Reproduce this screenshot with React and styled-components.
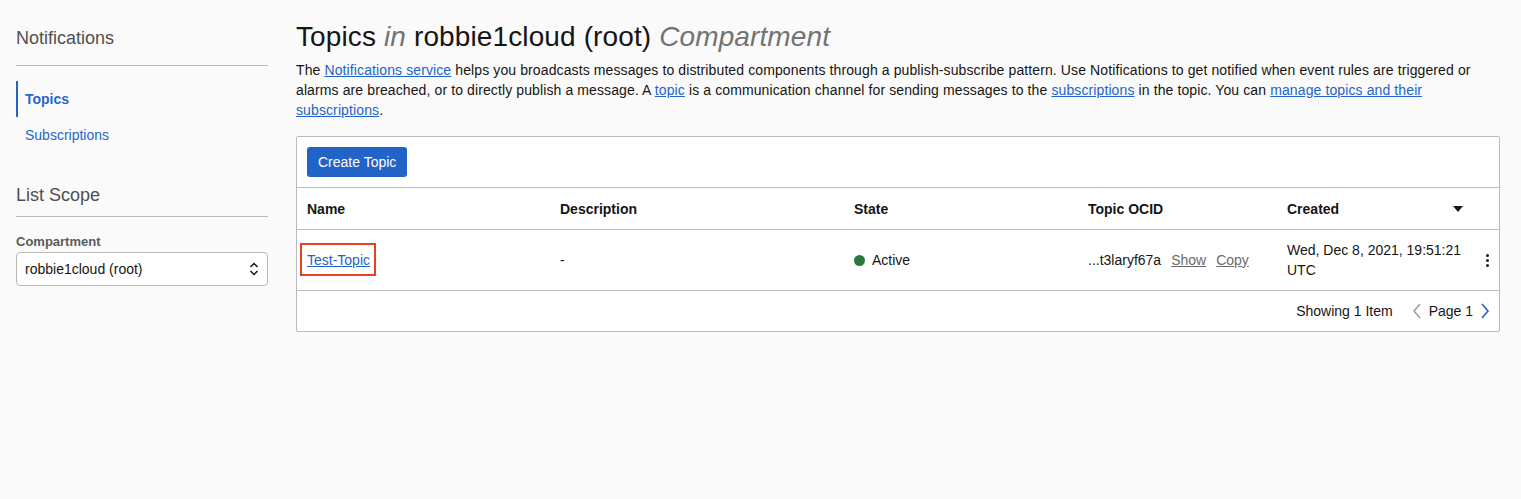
import React from 'react';
import styled, { createGlobalStyle } from 'styled-components';

const GlobalStyle = createGlobalStyle`
  html, body {
    margin: 0;
    padding: 0;
    background: #fafafa;
  }
  body {
    font-family: "Liberation Sans", Arial, sans-serif;
    color: #161513;
  }
`;

const Page = styled.div`
  display: flex;
  gap: 28px;
  padding: 20px 21px 0 16px;
  min-height: 479px;
`;

const Sidebar = styled.aside`
  width: 252px;
  flex: none;
`;

const SideTitle = styled.h2`
  margin: 0;
  font-size: 18px;
  font-weight: 400;
  line-height: 36px;
  color: #505050;
  padding-bottom: ${(p) => p.pad}px;
  border-bottom: 1px solid #b8bbbf;
`;

const NavList = styled.nav`
  display: flex;
  flex-direction: column;
  padding: 15px 0 0;
  margin-bottom: 24px;
`;

const NavItem = styled.a`
  display: block;
  height: 36px;
  line-height: 36px;
  padding-left: 7px;
  font-size: 14px;
  color: #2468c9;
  font-weight: ${(p) => (p.active ? 700 : 400)};
  border-left: 2px solid ${(p) => (p.active ? '#2462c4' : 'transparent')};
  text-decoration: none;
`;

const FieldLabel = styled.label`
  display: block;
  margin-top: 15px;
  font-size: 13px;
  font-weight: 700;
  color: #5a5a5a;
  line-height: 20px;
`;

const Select = styled.div`
  display: flex;
  align-items: center;
  justify-content: space-between;
  height: 34px;
  box-sizing: border-box;
  padding: 0 8px;
  background: #fff;
  border: 1px solid #b8b8b8;
  border-radius: 4px;
  font-size: 14px;
`;

const Main = styled.main`
  flex: 1;
  min-width: 0;
`;

const Title = styled.h1`
  margin: 0;
  font-size: 28px;
  font-weight: 400;
  line-height: 34px;
  letter-spacing: 0.12px;
  color: #161513;

  em {
    color: #737373;
  }
`;

const Intro = styled.p`
  margin: 6px 0 16px;
  font-size: 14px;
  line-height: 20px;
  letter-spacing: 0.11px;
`;

const Link = styled.a`
  color: #1f63c8;
  text-decoration: underline;
`;

const Card = styled.section`
  background: #fff;
  border: 1px solid #b9bcc0;
  border-radius: 2px;
`;

const Toolbar = styled.div`
  padding: 10px;
  border-bottom: 1px solid #b9bcc0;
`;

const PrimaryButton = styled.button`
  height: 30px;
  padding: 0 11px;
  border: none;
  border-radius: 3px;
  background: #2163c6;
  color: #fff;
  font-family: inherit;
  font-size: 14px;
`;

const Row = styled.div`
  display: grid;
  grid-template-columns: 253px 294px 234px 199px 1fr;
  min-height: ${(p) => p.height}px;
  border-bottom: 1px solid #b9bcc0;
`;

const Cell = styled.div`
  display: flex;
  align-items: center;
  gap: ${(p) => p.gap || 0}px;
  padding: 0 10px;
  font-size: 14px;
  line-height: 20px;
  font-weight: ${(p) => (p.head ? 700 : 400)};
  & + & {
    border-left: ${(p) => (p.head ? '1px solid #b9bcc0' : 'none')};
  }
`;

const HeadCell = styled(Cell).attrs({ head: true })``;

const Highlighted = styled.span`
  position: relative;
  &::after {
    content: '';
    position: absolute;
    top: -7px;
    bottom: -6px;
    left: -7px;
    right: -6px;
    border: 2px solid #e9401f;
  }
`;

const Dot = styled.span`
  width: 11px;
  height: 11px;
  border-radius: 50%;
  background: #2c7a3a;
`;

const SubtleLink = styled.a`
  color: #6b6b6b;
  text-decoration: underline;
  margin-left: ${(p) => p.gap}px;
`;

const SortArrow = styled.span`
  margin-left: auto;
  margin-right: 26px;
  width: 0;
  height: 0;
  border-left: 5px solid transparent;
  border-right: 5px solid transparent;
  border-top: 6px solid #161513;
`;

const Kebab = styled.span`
  margin-left: auto;
  display: flex;
  flex-direction: column;
  gap: 2px;
  span {
    width: 3px;
    height: 3px;
    border-radius: 50%;
    background: #161513;
  }
`;

const Footer = styled.div`
  display: flex;
  justify-content: flex-end;
  align-items: center;
  height: 40px;
  padding-right: 8px;
  font-size: 14px;
`;

const Pager = styled.span`
  display: flex;
  align-items: center;
  gap: 6px;
  margin-left: 18px;
`;

const Chevron = ({ dir, color }) => (
  <svg width="12" height="18" viewBox="0 0 12 18">
    <path
      d={dir === 'left' ? 'M9 2 L3 9 L9 16' : 'M3 2 L9 9 L3 16'}
      fill="none"
      stroke={color}
      strokeWidth="1.6"
    />
  </svg>
);

const UpDown = () => (
  <svg width="10" height="16" viewBox="0 0 10 16">
    <path d="M1.5 6 L5 2.5 L8.5 6 M1.5 10 L5 13.5 L8.5 10" fill="none" stroke="#161513" strokeWidth="1.5" />
  </svg>
);

export default function App() {
  return (
    <>
      <GlobalStyle />
      <Page>
        <Sidebar>
          <SideTitle pad={9}>Notifications</SideTitle>
          <NavList>
            <NavItem active>Topics</NavItem>
            <NavItem>Subscriptions</NavItem>
          </NavList>
          <SideTitle pad={3}>List Scope</SideTitle>
          <FieldLabel>Compartment</FieldLabel>
          <Select>
            <span>robbie1cloud (root)</span>
            <UpDown />
          </Select>
        </Sidebar>

        <Main>
          <Title>
            Topics <em>in</em> robbie1cloud (root) <em>Compartment</em>
          </Title>
          <Intro>
            The <Link>Notifications service</Link> helps you broadcasts messages to distributed components
            through a publish-subscribe pattern. Use Notifications to get notified when event rules are
            triggered or alarms are breached, or to directly publish a message. A <Link>topic</Link> is a
            communication channel for sending messages to the <Link>subscriptions</Link> in the topic. You
            can <Link>manage topics and their subscriptions</Link>.
          </Intro>

          <Card>
            <Toolbar>
              <PrimaryButton>Create Topic</PrimaryButton>
            </Toolbar>
            <Row height={41}>
              <HeadCell>Name</HeadCell>
              <HeadCell>Description</HeadCell>
              <HeadCell>State</HeadCell>
              <HeadCell>Topic OCID</HeadCell>
              <HeadCell>
                Created
                <SortArrow />
              </HeadCell>
            </Row>
            <Row height={60}>
              <Cell>
                <Highlighted>
                  <Link>Test-Topic</Link>
                </Highlighted>
              </Cell>
              <Cell>-</Cell>
              <Cell gap={7}>
                <Dot />
                Active
              </Cell>
              <Cell>
                ...t3laryf67a
                <SubtleLink gap={10}>Show</SubtleLink>
                <SubtleLink gap={10}>Copy</SubtleLink>
              </Cell>
              <Cell>
                <span>
                  Wed, Dec 8, 2021, 19:51:21
                  <br />
                  UTC
                </span>
                <Kebab>
                  <span />
                  <span />
                  <span />
                </Kebab>
              </Cell>
            </Row>
            <Footer>
              Showing 1 Item
              <Pager>
                <Chevron dir="left" color="#a0a0a0" />
                Page 1
                <Chevron dir="right" color="#1f63c8" />
              </Pager>
            </Footer>
          </Card>
        </Main>
      </Page>
    </>
  );
}
